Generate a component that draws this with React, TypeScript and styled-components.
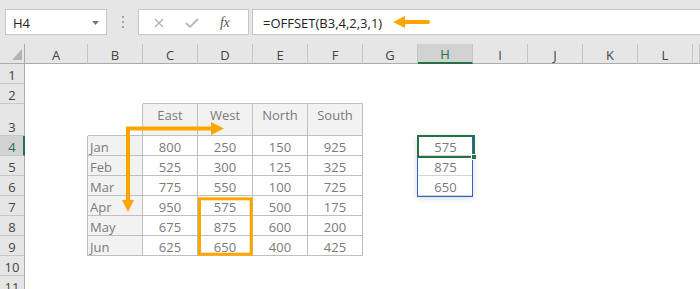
import React from "react";
import styled, { createGlobalStyle, css } from "styled-components";

const ORANGE = "#ffa500";
const GREEN = "#217346";
const HEADER_LINE = "#ababab";
const TABLE_LINE = "#bfbfbf";

const GlobalStyle = createGlobalStyle`
  html, body {
    margin: 0;
    padding: 0;
    background: #ffffff;
  }
`;

const Page = styled.div`
  position: relative;
  width: 700px;
  height: 289px;
  overflow: hidden;
  background: #e6e6e6;
  font-family: "Open Sans", "Liberation Sans", sans-serif;
`;

const FormulaBar = styled.div`
  display: flex;
  height: 26px;
  padding: 9px 0 0 5px;
  margin-bottom: 9px;
`;

const Box = styled.div`
  box-sizing: border-box;
  display: flex;
  align-items: center;
  background: #ffffff;
  border: 1px solid #c6c6c6;
  padding-top: 2px;
  font-size: 13px;
  line-height: 16px;
  color: #222222;
`;

const NameBox = styled(Box)`
  width: 102px;
  justify-content: space-between;
  padding: 2px 7px 0 7px;
`;

const Grip = styled.div`
  width: 31px;
  display: flex;
  flex-direction: column;
  align-items: center;
  justify-content: center;
  gap: 3px;

  span {
    width: 2px;
    height: 2px;
    background: #a6a6a6;
  }
`;

const FuncBox = styled(Box)`
  width: 111px;
  gap: 21px;
  padding-left: 15px;
`;

const FxLabel = styled.span`
  font-family: "Liberation Serif", "DejaVu Serif", serif;
  font-style: italic;
  font-size: 14px;
  color: #555555;
  letter-spacing: -0.5px;
`;

const FormulaInput = styled(Box)`
  flex: 1;
  margin-left: 3px;
  border-right: none;
  padding-left: 10px;
`;

const FormulaArrow = styled.svg`
  margin-left: 11px;
  margin-top: -2px;
`;

const Sheet = styled.div`
  display: grid;
  grid-template-columns: 25px 63px repeat(11, 55px) 1fr;
  grid-template-rows: 20px 20px 20px 32px repeat(8, 20px);
  background: #ffffff;
`;

const Placed = styled.div<{ $r: number | string; $c: number | string }>`
  grid-row: ${({ $r }) => $r};
  grid-column: ${({ $c }) => $c};
  box-sizing: border-box;
  min-width: 0;
`;

const Corner = styled(Placed)`
  position: relative;
  background: #e6e6e6;
  border-right: 1px solid ${HEADER_LINE};
  border-bottom: 1px solid ${HEADER_LINE};

  svg {
    position: absolute;
    right: 2px;
    bottom: 3px;
  }
`;

const ColHead = styled(Placed)<{ $active?: boolean }>`
  display: flex;
  justify-content: center;
  align-items: flex-end;
  overflow: hidden;
  font-size: 13px;
  line-height: 16px;
  color: #444444;
  background: #e6e6e6;
  border-right: 1px solid #c4c4c4;
  border-bottom: 1px solid ${HEADER_LINE};

  ${({ $active }) =>
    $active &&
    css`
      background: #d2d2d2;
      color: ${GREEN};
      border-bottom: 2px solid ${GREEN};
      line-height: 15px;
    `}
`;

const RowHead = styled(Placed)<{ $active?: boolean }>`
  display: flex;
  justify-content: center;
  align-items: flex-end;
  font-size: 13px;
  line-height: 16px;
  color: #444444;
  background: #e6e6e6;
  border-right: 1px solid ${HEADER_LINE};
  border-bottom: 1px solid #c8c8c8;

  ${({ $active }) =>
    $active &&
    css`
      background: #d2d2d2;
      color: ${GREEN};
      border-right: 2px solid ${GREEN};
      padding-left: 1px;
    `}
`;

type Kind = "blank" | "corner" | "head" | "label" | "data" | "result";

const kindStyles: Record<Kind, ReturnType<typeof css>> = {
  blank: css``,
  corner: css`
    border-right: 1px solid ${TABLE_LINE};
    border-bottom: 1px solid ${TABLE_LINE};
  `,
  head: css`
    justify-content: center;
    align-items: flex-start;
    padding-top: 3px;
    background: #f2f2f2;
    border-right: 1px solid ${TABLE_LINE};
    border-bottom: 1px solid ${TABLE_LINE};
    box-shadow: 0 -1px 0 ${TABLE_LINE};
  `,
  label: css`
    padding-left: 2px;
    background: #f2f2f2;
    border-right: 1px solid ${TABLE_LINE};
    border-bottom: 1px solid ${TABLE_LINE};
    box-shadow: -1px 0 0 ${TABLE_LINE};
  `,
  data: css`
    justify-content: center;
    border-right: 1px solid ${TABLE_LINE};
    border-bottom: 1px solid ${TABLE_LINE};
  `,
  result: css`
    justify-content: center;
    border-bottom: 1px solid #d4d4d4;
  `,
};

const Cell = styled(Placed)<{ $kind: Kind }>`
  display: flex;
  align-items: flex-end;
  white-space: nowrap;
  font-size: 13px;
  line-height: 16px;
  color: #7a7a7a;
  ${({ $kind }) => kindStyles[$kind]}
`;

const Selection = styled(Placed)`
  position: relative;
  z-index: 2;
  margin: 0 0 -1px -1px;
  border: 1px solid #2d64c8;
  box-shadow: 0 1px 6px rgba(0, 0, 0, 0.16);
  pointer-events: none;
`;

const ActiveCell = styled(Placed)`
  position: relative;
  z-index: 3;
  margin: -1px -2px -2px -1px;
  border: 2px solid ${GREEN};
  pointer-events: none;
`;

const FillHandle = styled.div`
  position: absolute;
  right: -4px;
  bottom: -4px;
  width: 6px;
  height: 6px;
  box-sizing: border-box;
  background: ${GREEN};
  border: 1px solid #ffffff;
`;

const Annotations = styled.svg`
  position: absolute;
  left: 0;
  top: 0;
  pointer-events: none;
`;

// the last column is only a sliver at the right edge, its letter is off-screen
const COLS = "ABCDEFGHIJKLM".split("");
const VISIBLE_LETTERS = "ABCDEFGHIJKL";
const ROWS = Array.from({ length: 11 }, (_, i) => i + 1);
const REGIONS = ["East", "West", "North", "South"];
const MONTHS = ["Jan", "Feb", "Mar", "Apr", "May", "Jun"];
const SALES = [
  [800, 250, 150, 925],
  [525, 300, 125, 325],
  [775, 550, 100, 725],
  [950, 575, 500, 175],
  [675, 875, 600, 200],
  [625, 650, 400, 425],
];
const RESULT = [575, 875, 650];
const ACTIVE_ROW = 4;
const ACTIVE_COL = "H";

const cellAt = (row: number, col: string): { kind: Kind; text?: string } => {
  const ci = COLS.indexOf(col);
  if (row === 3 && col === "B") return { kind: "corner" };
  if (row === 3 && ci >= 2 && ci <= 5) return { kind: "head", text: REGIONS[ci - 2] };
  if (row >= 4 && row <= 9) {
    if (col === "B") return { kind: "label", text: MONTHS[row - 4] };
    if (ci >= 2 && ci <= 5) return { kind: "data", text: String(SALES[row - 4][ci - 2]) };
  }
  if (col === "H" && row >= 4 && row <= 6) return { kind: "result", text: String(RESULT[row - 4]) };
  return { kind: "blank" };
};

// grid line helpers: column 1 is the row header, row 1 is the column header
const gc = (col: string) => COLS.indexOf(col) + 2;
const gr = (row: number) => row + 1;

export default function App() {
  return (
    <>
      <GlobalStyle />
      <Page>
        <FormulaBar>
          <NameBox>
            <span>H4</span>
            <svg width="7" height="4" viewBox="0 0 7 4">
              <path d="M0 0H7L3.5 4Z" fill="#777" />
            </svg>
          </NameBox>
          <Grip>
            <span />
            <span />
            <span />
          </Grip>
          <FuncBox>
            <svg width="10" height="10" viewBox="0 0 10 10">
              <path d="M1 1L9 9M9 1L1 9" stroke="#b3b3b3" strokeWidth="1.4" />
            </svg>
            <svg width="14" height="10" viewBox="0 0 14 10">
              <path d="M1 5L5 9L13 1" stroke="#b8b8b8" strokeWidth="1.8" fill="none" />
            </svg>
            <FxLabel>fx</FxLabel>
          </FuncBox>
          <FormulaInput>
            <span>=OFFSET(B3,4,2,3,1)</span>
            <FormulaArrow width="38" height="14" viewBox="0 0 38 14">
              <path d="M10 7H35" stroke={ORANGE} strokeWidth="4" strokeLinecap="round" />
              <path d="M0 7L12 1V13Z" fill={ORANGE} />
            </FormulaArrow>
          </FormulaInput>
        </FormulaBar>

        <Sheet>
          <Corner $r={1} $c={1}>
            <svg width="10" height="11" viewBox="0 0 10 11">
              <path d="M10 0V11H0Z" fill="#b4b4b4" />
            </svg>
          </Corner>
          {COLS.map((col) => (
            <ColHead key={col} $r={1} $c={gc(col)} $active={col === ACTIVE_COL}>
              {VISIBLE_LETTERS.includes(col) ? col : ""}
            </ColHead>
          ))}
          {ROWS.map((row) => (
            <React.Fragment key={row}>
              <RowHead $r={gr(row)} $c={1} $active={row === ACTIVE_ROW}>
                {row}
              </RowHead>
              {COLS.map((col) => {
                const cell = cellAt(row, col);
                return (
                  <Cell key={col} $r={gr(row)} $c={gc(col)} $kind={cell.kind}>
                    {cell.text}
                  </Cell>
                );
              })}
            </React.Fragment>
          ))}
          <Selection $r={`${gr(4)} / ${gr(7)}`} $c={gc("H")} />
          <ActiveCell $r={gr(4)} $c={gc("H")}>
            <FillHandle />
          </ActiveCell>
        </Sheet>

        <Annotations width="700" height="289" viewBox="0 0 700 289">
          <path d="M128 202V128.5H213" stroke={ORANGE} strokeWidth="4" fill="none" />
          <path d="M211 122L224 128.5L211 135Z" fill={ORANGE} />
          <path d="M122 200H134L128 212Z" fill={ORANGE} />
          <rect x="199.5" y="198.8" width="51.7" height="55.4" stroke={ORANGE} strokeWidth="3" fill="none" />
        </Annotations>
      </Page>
    </>
  );
}
